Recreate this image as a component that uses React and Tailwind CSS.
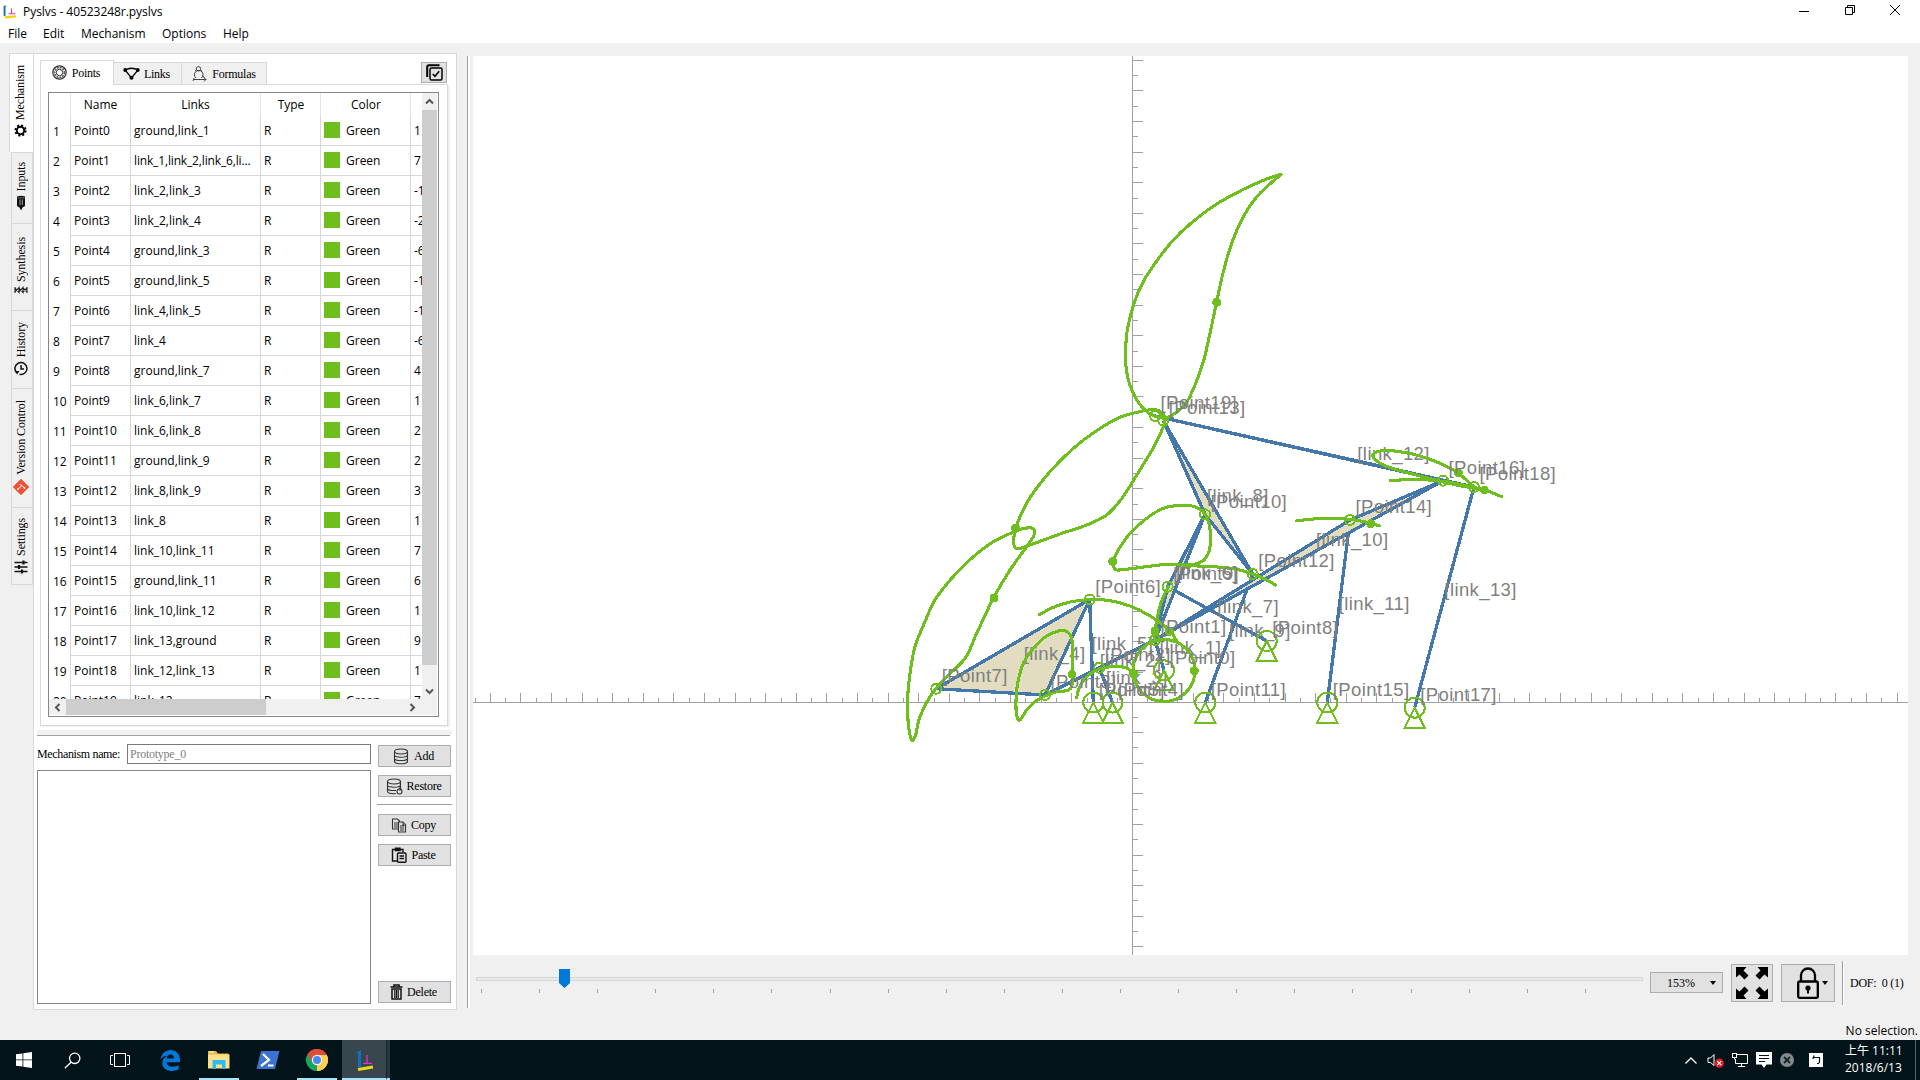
import React from "react";

const UI = "font-['Open_Sans','Noto_Sans',sans-serif] text-[12px]";
const SERIF = "font-['Liberation_Serif',serif] text-[12px] tracking-[-0.25px]";

/* ---------- table data ---------- */

const ROWS = [
  ["Point0", "ground,link_1", "1"],
  ["Point1", "link_1,link_2,link_6,li...", "7"],
  ["Point2", "link_2,link_3", "-1"],
  ["Point3", "link_2,link_4", "-2"],
  ["Point4", "ground,link_3", "-6"],
  ["Point5", "ground,link_5", "-1"],
  ["Point6", "link_4,link_5", "-1"],
  ["Point7", "link_4", "-6"],
  ["Point8", "ground,link_7", "4"],
  ["Point9", "link_6,link_7", "1"],
  ["Point10", "link_6,link_8", "2"],
  ["Point11", "ground,link_9", "2"],
  ["Point12", "link_8,link_9", "3"],
  ["Point13", "link_8", "1"],
  ["Point14", "link_10,link_11", "7"],
  ["Point15", "ground,link_11", "6"],
  ["Point16", "link_10,link_12", "1"],
  ["Point17", "link_13,ground", "9"],
  ["Point18", "link_12,link_13", "1"],
  ["Point19", "link_12", "7"],
];

/* ---------- mechanism data ---------- */

const ORIGIN = [1132, 702];
const TICK = 15.3;

const POINTS = [
  [1164, 670.3, true],
  [1155, 640],
  [1099.3, 667.7],
  [1045, 695],
  [1112.5, 702.5, true],
  [1093.3, 702.5, true],
  [1089.7, 599.5],
  [936.3, 688.7],
  [1266.7, 641, true],
  [1167.7, 586.7],
  [1205, 514.3],
  [1205.3, 702.5, true],
  [1252.7, 574],
  [1163.3, 420.7],
  [1350, 520],
  [1327.3, 702.5, true],
  [1443, 480.7],
  [1414.7, 707.7, true],
  [1474, 487],
  [1155, 416],
];

const LINKS = {
  link_1: [0, 1],
  link_2: [1, 2, 3],
  link_3: [2, 4],
  link_4: [3, 6, 7],
  link_5: [5, 6],
  link_6: [1, 9, 10],
  link_7: [8, 9],
  link_8: [10, 12, 13],
  link_9: [11, 12],
  link_10: [1, 14, 16],
  link_11: [14, 15],
  link_12: [16, 18, 19],
  link_13: [17, 18],
};

/* Each trace is sampled in thirds of a pixel from its own offset. */
const TRACES = [
  { at: [880, 150], pts: [[1203,73],[1160,87],[1090,118],[1010,162],[935,218],[880,270],[825,340],[790,395],[762,460],[742,540],[737,600],[738,650],[748,700],[770,750],[793,778],[820,797],[855,804],[885,790],[918,760],[945,705],[970,635],[990,550],[1010,455],[1030,365],[1055,280],[1090,200],[1135,135],[1203,73]] },
  { at: [880, 400], pts: [[407,383],[425,340],[455,285],[510,215],[580,145],[650,92],[720,52],[780,35],[820,29],[845,38],[855,62],[830,125],[795,185],[760,242],[725,296],[680,345],[620,375],[540,402],[450,435],[415,446],[403,440],[402,410],[407,383]] },
  { at: [880, 400], pts: [[430,385],[385,403],[340,425],[280,470],[215,535],[165,600],[135,665],[105,740],[90,820],[83,890],[84,960],[90,1005],[99,1022],[108,1000],[120,950],[150,890],[190,840],[255,775],[290,700],[340,595],[390,510],[440,440],[462,405],[458,385],[430,385]] },
  { at: [880, 400], pts: [[577,823],[577,760],[575,715],[562,696],[540,692],[500,708],[460,745],[430,790],[413,850],[408,900],[410,945],[420,960],[440,930],[465,905],[495,888],[530,875],[560,872],[575,860],[577,823]] },
  { at: [880, 400], pts: [[590,893],[598,862],[620,830],[655,808],[700,800],[740,804],[762,822]] },
  { at: [880, 400], pts: [[478,644],[520,622],[570,606],[629,599],[690,602],[750,618],[800,642],[840,668],[870,692],[893,728]] },
  { at: [880, 400], pts: [[865,560],[850,590],[838,625],[830,665],[825,692],[825,718]] },
  { at: [1080, 440], pts: [[98,365],[115,330],[150,280],[200,235],[250,205],[300,196],[345,200],[375,222],[388,255],[392,300],[385,340],[365,365],[325,375],[260,373],[200,380],[118,390],[103,385],[98,365]] },
  { at: [1080, 440], pts: [[320,377],[400,380],[470,388],[518,402],[550,415],[587,435]] },
  { at: [1280, 430], pts: [[48,273],[100,267],[160,265],[210,268],[265,278],[300,288]] },
  { at: [1280, 430], pts: [[330,152],[380,149],[430,149],[489,154],[550,165],[613,180],[665,200]] },
  { at: [1280, 430], pts: [[582,171],[535,130],[480,100],[420,78],[360,65],[310,62],[282,70],[282,85],[310,105],[360,122],[420,138],[489,156],[540,167],[610,180]] },
];

const DOTS = [
  [1216.7, 302.3], [1184.7, 404.5, 3], [1015.7, 528], [994, 598], [1072, 674.3],
  [1133.7, 673.7], [1169.3, 631.5], [1194.3, 670.7], [1155, 631], [1112.7, 561.5],
  [1188.3, 566, 3], [1370.7, 523.7], [1484.3, 490], [1458.3, 472.7],
];

function smooth({ at, pts }) {
  const p = pts.map(([x, y]) => [at[0] + x / 3, at[1] + y / 3]);
  let d = `M${p[0][0]} ${p[0][1]}`;
  for (let i = 0; i < p.length - 1; i++) {
    const a = p[i - 1] || p[i];
    const b = p[i];
    const c = p[i + 1];
    const e = p[i + 2] || c;
    d += `C${b[0] + (c[0] - a[0]) / 6} ${b[1] + (c[1] - a[1]) / 6} ${c[0] - (e[0] - b[0]) / 6} ${c[1] - (e[1] - b[1]) / 6} ${c[0]} ${c[1]}`;
  }
  return d;
}

function axisTicks() {
  let d = "";
  for (let i = -45; i <= 50; i++) {
    const len = i % 2 === 0 ? 10 : 5;
    const x = ORIGIN[0] + Math.trunc(i * TICK) + 0.5;
    if (x > 474) d += `M${x} 702.5V${702.5 - len}`;
    const y = ORIGIN[1] + Math.trunc(i * TICK) + 0.5;
    if (y > 56 && y < 955) d += `M1132.5 ${y}H${1132.5 + len}`;
  }
  return d;
}

function Canvas() {
  const entries = Object.entries(LINKS);
  const bars = entries.filter(([, v]) => v.length === 2);
  const plates = entries.filter(([, v]) => v.length > 2);
  return (
    <svg width="1435" height="899" viewBox="473 56 1435 899" className="block bg-white">
      <g shapeRendering="crispEdges" fill="none">
        <path d={`M473 702.5H1908M1132.5 56V955${axisTicks()}`} stroke="#a0a0a4" strokeWidth="1" />
        {bars.map(([k, [a, b]]) => (
          <path key={k} d={`M${POINTS[a][0]} ${POINTS[a][1]}L${POINTS[b][0]} ${POINTS[b][1]}`} stroke="#4477aa" strokeWidth="3.3" />
        ))}
        {plates.map(([k, v]) => (
          <polygon key={k} points={v.map((i) => `${POINTS[i][0]},${POINTS[i][1]}`).join(" ")} fill="#e2dcc0" stroke="#4477aa" strokeWidth="3.3" strokeLinejoin="bevel" />
        ))}
      </g>
      <g fill="#808080" className="font-['Liberation_Sans',Arial,sans-serif] text-[18.5px] tracking-[0.4px]">
        {entries.map(([k, v]) => {
          const x = v.reduce((s, i) => s + POINTS[i][0], 0) / v.length;
          const y = v.reduce((s, i) => s + POINTS[i][1], 0) / v.length;
          return <text key={k} x={x} y={y - 1}>{`[${k}]`}</text>;
        })}
      </g>
      <g shapeRendering="crispEdges" fill="none" stroke="#6ebe1e">
        {TRACES.map((t, i) => (
          <path key={i} d={smooth(t)} strokeWidth="3.1" strokeLinecap="round" strokeLinejoin="round" />
        ))}
        <circle cx="1164" cy="670.5" r="31" strokeWidth="3.1" />
        {DOTS.map(([x, y, r = 4.5], i) => (
          <circle key={i} cx={x} cy={y} r={r} fill="#6ebe1e" stroke="none" />
        ))}
        {POINTS.map(([x, y, ground], i) => (
          <path
            key={i}
            strokeWidth="2"
            d={
              ground
                ? `M${x - 10} ${y}a10 10 0 1 0 20 0a10 10 0 1 0 -20 0M${x} ${y}L${x - 10} ${y + 20}H${x + 10}Z`
                : `M${x - 5} ${y}a5 5 0 1 0 10 0a5 5 0 1 0 -10 0`
            }
          />
        ))}
      </g>
      <g fill="#808080" className="font-['Liberation_Sans',Arial,sans-serif] text-[18.5px] tracking-[0.4px]">
        {POINTS.map(([x, y], i) => (
          <text key={i} x={x + 5.5} y={y - 6.7}>{`[Point${i}]`}</text>
        ))}
      </g>
    </svg>
  );
}

/* ---------- icons ---------- */

const Logo = ({ size }) => (
  <svg width={size} height={size} viewBox="0 0 18 18" fill="none">
    <path d="M2 2V14" stroke="#0a6fc2" strokeWidth="2.4" />
    <path d="M1 2.2L4 1" stroke="#0a6fc2" strokeWidth="1.4" />
    <path d="M2 16L17 14.6" stroke="#f2d80a" strokeWidth="3" />
    <path d="M11 4.5V11M7 11.3H16" stroke="#f02be8" strokeWidth="1.4" />
  </svg>
);

const GearIcon = () => (
  <svg width="13" height="13" viewBox="0 0 13 13" fill="none" stroke="#000">
    <circle cx="6.5" cy="6.5" r="3.7" strokeWidth="2" />
    <circle cx="6.5" cy="6.5" r="5.2" strokeWidth="1.8" strokeDasharray="2.1 1.98" />
  </svg>
);
const PlugIcon = () => (
  <svg width="10" height="16" viewBox="0 0 10 16">
    <path d="M1 1.5Q5 0 9 1.500V11L6.500 12.500L5 15.500L3.500 12.500L1 11Z" fill="#111" />
    <path d="M4 4.500v5.500M6.300 4.500v5.500" stroke="#ddd" strokeWidth="0.7" />
    <path d="M1.500 2.900H8.500" stroke="#999" strokeWidth="0.700" />
  </svg>
);
const SpringIcon = () => (
  <svg width="14" height="8" viewBox="0 0 14 8" fill="none" stroke="#222" strokeWidth="1.1">
    <path d="M1 1V7M13 1V7M1 2L5 6.500V1.500L1 6M5 2L9 6.500V1.500L5 6M9 2L13 6M9 6L13 2" />
  </svg>
);
const HistoryIcon = () => (
  <svg width="14" height="15" viewBox="0 0 14 15" fill="none" stroke="#111" strokeWidth="1.500">
    <path d="M2.500 11.500A6 6 0 1 1 5.500 13.300" />
    <path d="M7 4V8H10" />
    <path d="M1 10L5.500 10L3 13.500Z" fill="#111" stroke="none" />
  </svg>
);
const GitIcon = () => (
  <svg width="16" height="16" viewBox="0 0 16 16">
    <path d="M8 0.300L15.700 8L8 15.700L0.300 8Z" fill="#f05033" stroke="#f05033" strokeLinejoin="round" />
    <path d="M5 10L9 6.500L6.500 5.500M9 6.500L11.500 9" stroke="#fff" strokeWidth="0.900" fill="none" />
    <circle cx="5" cy="10" r="0.900" fill="#fff" />
    <circle cx="11.500" cy="9" r="0.900" fill="#fff" />
  </svg>
);
const SlidersIcon = () => (
  <svg width="14" height="14" viewBox="0 0 14 14" stroke="#111" fill="none">
    <path d="M0.500 2.500H13.500M0.500 7H13.500M0.500 11.500H13.500" strokeWidth="1.700" />
    <path d="M9.500 0.500V4.500M5 5V9M8 9.500V13.500" strokeWidth="2.200" />
  </svg>
);
const PointsIcon = () => (
  <svg width="15" height="15" viewBox="0 0 15 15" fill="none" stroke="#333">
    <circle cx="7.500" cy="7.500" r="6.700" strokeWidth="1.200" />
    <circle cx="7.500" cy="7.500" r="5" strokeWidth="1.900" strokeDasharray="2 0.900" stroke="#666" />
    <circle cx="7.500" cy="7.500" r="3.200" strokeWidth="1" />
  </svg>
);
const LinksIcon = () => (
  <svg width="17" height="13" viewBox="0 0 17 13" fill="none" stroke="#000">
    <path d="M2 3Q8.500 -0.500 15 3L8.500 11Z" strokeWidth="1.300" />
    <circle cx="2.200" cy="3" r="1.900" fill="#000" stroke="none" />
    <circle cx="14.800" cy="3" r="1.900" fill="#000" stroke="none" />
    <circle cx="8.500" cy="10.800" r="2" fill="#000" stroke="none" />
  </svg>
);
const FormulasIcon = () => (
  <svg width="15" height="16" viewBox="0 0 15 16" fill="none" stroke="#444" strokeWidth="1">
    <circle cx="6.500" cy="2.800" r="2.200" />
    <path d="M4 12A4.300 4.300 0 1 1 9.500 12M3 5L5 3M10 6L8.500 3.500M1 13.500H14M12 11.500L14 13.500L12 15.500M2 12L1 15M10.500 9.500L12.500 12" />
  </svg>
);
const SelectIcon = () => (
  <svg width="17" height="17" viewBox="0 0 17 17" fill="none" stroke="#000">
    <path d="M13.500 1.200H3Q1.200 1.200 1.200 3V13" strokeWidth="2" />
    <rect x="4" y="4" width="12" height="12" rx="1.500" strokeWidth="1.500" />
    <path d="M6.800 10L9 12.300L13.200 7.300" strokeWidth="1.600" />
  </svg>
);
const DatabaseIcon = ({ restore }) => (
  <svg width="17" height="17" viewBox="0 0 17 17" fill="none" stroke="#333" strokeWidth="1.100">
    <ellipse cx="8" cy="3.500" rx="6.500" ry="2.500" />
    <path d="M1.500 3.500V13.300C1.500 16.600 14.500 16.600 14.500 13.300V3.500M1.500 7C1.500 10 14.500 10 14.500 7M1.500 10.200C1.500 13.300 14.500 13.300 14.500 10.200" />
    {restore && (
      <>
        <rect x="10" y="10" width="7" height="7" fill="#e1e1e1" stroke="none" />
        <circle cx="13.500" cy="13.500" r="2.500" />
        <path d="M13 9.800L15 11L13.500 12.500" />
      </>
    )}
  </svg>
);
const CopyIcon = () => (
  <svg width="16" height="15" viewBox="0 0 16 15" fill="#e1e1e1" stroke="#333" strokeWidth="1.100">
    <path d="M1.500 1H6.500L8.500 3V11H1.500Z" />
    <path d="M3 5H7M3 7H7M3 9H7" />
    <path d="M7.500 4H12L14.500 6.500V14H7.500Z" />
    <path d="M9 8H13M9 10H13M9 12H13M12 4V7H14.500" />
  </svg>
);
const PasteIcon = () => (
  <svg width="16" height="16" viewBox="0 0 16 16" fill="none" stroke="#111" strokeWidth="1.400">
    <path d="M6 14H1.500V2.500H12V5" />
    <path d="M4.500 3.500V1.200H9V3.500Z" fill="#111" />
    <rect x="6.500" y="6" width="8.500" height="9.200" rx="1" />
    <path d="M8.500 9H13M8.500 11.500H13" />
  </svg>
);
const TrashIcon = () => (
  <svg width="13" height="16" viewBox="0 0 13 16" fill="none" stroke="#111">
    <path d="M0.500 3H12.500M4 2.500V1H9V2.500" strokeWidth="1.600" />
    <path d="M2 5H11V15H2Z" strokeWidth="1.500" />
    <path d="M4.800 6V14M8.200 6V14M6.500 6V14" strokeWidth="1.200" />
  </svg>
);
const Chevron = ({ d }) => (
  <svg width="9" height="9" viewBox="0 0 9 9" fill="none" stroke="#555" strokeWidth="2">
    <path d={d} />
  </svg>
);

/* ---------- left side ---------- */

const SIDE_TABS = [
  ["Mechanism", "h-[99px] w-[24px] ml-0 bg-white border-r-0 pb-[15px] pr-[3px]", <GearIcon />],
  ["Inputs", "h-[71px] w-[22px] ml-[2px] bg-[#f0f0f0] pb-[12px] pr-[2px]", <PlugIcon />],
  ["Synthesis", "h-[87px] w-[22px] ml-[2px] bg-[#f0f0f0] pb-[16px] pr-[2px]", <SpringIcon />],
  ["History", "h-[78px] w-[22px] ml-[2px] bg-[#f0f0f0] pb-[12px] pr-[2px]", <HistoryIcon />],
  ["Version Control", "h-[119px] w-[22px] ml-[2px] bg-[#f0f0f0] pb-[12px] pr-[2px]", <GitIcon />],
  ["Settings", "h-[78px] w-[22px] ml-[2px] bg-[#f0f0f0] pb-[10px] pr-[2px]", <SlidersIcon />],
];

function SideTabs() {
  return (
    <div className="flex flex-col w-[24px] mt-[10px]">
      {SIDE_TABS.map(([name, cls, icon]) => (
        <div key={name} className={`box-border border border-[#d9d9d9] border-b-0 last:border-b flex flex-col items-center justify-end gap-[4px] shrink-0 ${cls}`}>
          <span className="font-['Liberation_Serif',serif] text-[12px] tracking-[-0.1px] [writing-mode:vertical-rl] rotate-180 leading-[16px] whitespace-nowrap">{name}</span>
          {icon}
        </div>
      ))}
    </div>
  );
}

function PointTable() {
  const cell = "h-full border-r border-b border-[#d8d8d8] flex items-center pl-[3px] whitespace-nowrap overflow-hidden shrink-0";
  const head = "h-full border-r border-[#e5e5e5] flex items-center justify-center shrink-0";
  return (
    <div className={`w-[391px] h-[625px] border border-[#828790] bg-white flex flex-col leading-[16px] ${UI}`}>
      <div className="flex h-[606px] w-full">
        <div className="w-[373px] h-full overflow-hidden flex flex-col">
          <div className="flex h-[23px] shrink-0 w-[420px]">
            <div className={`${head} w-[22px]`} />
            <div className={`${head} w-[60px]`}>Name</div>
            <div className={`${head} w-[130px]`}>Links</div>
            <div className={`${head} w-[60px] pl-px`}>Type</div>
            <div className={`${head} w-[90px] pl-px`}>Color</div>
          </div>
          {ROWS.map(([name, links, v], i) => (
            <div key={name} className="flex h-[30px] shrink-0 w-[420px]">
              <div className="w-[22px] h-full border-r border-[#d8d8d8] pl-[4px] pt-[1px] flex items-center shrink-0">{i + 1}</div>
              <div className={`${cell} w-[60px]`}>{name}</div>
              <div className={`${cell} w-[130px] ${links.length > 20 ? "tracking-[-0.15px]" : ""}`}>{links}</div>
              <div className={`${cell} w-[60px]`}>R</div>
              <div className={`${cell} w-[90px] gap-[6px]`}>
                <div className="size-[16px] mb-[1px] bg-[#6ebe1e]" />
                Green
              </div>
              <div className={`${cell} w-[58px]`}>{v}</div>
            </div>
          ))}
        </div>
        <div className="w-[15px] h-full bg-[#f0f0f0] flex flex-col items-center">
          <div className="h-[17px] flex items-center"><Chevron d="M1 6.500L4.500 3L8 6.500" /></div>
          <div className="w-full h-[555px] bg-[#cdcdcd]" />
          <div className="mt-[22px]"><Chevron d="M1 2.500L4.500 6L8 2.500" /></div>
        </div>
      </div>
      <div className="w-[388px] h-[16px] bg-[#f0f0f0] flex items-center">
        <div className="w-[17px] flex justify-center"><Chevron d="M6.500 1L3 4.500L6.500 8" /></div>
        <div className="w-[200px] h-full bg-[#cdcdcd]" />
        <div className="ml-[142px]"><Chevron d="M2.500 1L6 4.500L2.500 8" /></div>
      </div>
    </div>
  );
}

function PushButton({ icon, children, className = "" }) {
  return (
    <div className={`w-[73px] h-[22px] bg-[#e1e1e1] border border-[#adadad] flex items-center justify-center gap-[4px] pr-[2px] leading-[14px] ${className}`}>
      {icon}
      <span>{children}</span>
    </div>
  );
}

function LeftPanel() {
  return (
    <div className="w-[424px] h-[957px] mt-[10px] bg-white border border-[#d9d9d9] flex flex-col">
      <div className={`flex items-end h-[30px] pt-[6px] pl-[6px] leading-[14px] ${SERIF}`}>
        <div className="w-[74px] h-[25px] -mb-px relative bg-white border border-b-0 border-[#d9d9d9] flex items-center justify-center gap-[5px] pb-[1px] pr-[2px]">
          <PointsIcon />Points
        </div>
        <div className="w-[68px] h-[22px] bg-[#f0f0f0] border border-l-0 border-b-0 border-[#d9d9d9] flex items-center justify-center gap-[4px] pr-[2px]">
          <LinksIcon />Links
        </div>
        <div className="w-[85px] h-[22px] bg-[#f0f0f0] border border-l-0 border-b-0 border-[#d9d9d9] flex items-center justify-center gap-[5px]">
          <FormulasIcon />Formulas
        </div>
        <div className="ml-[154px] mb-[1px] w-[26px] h-[21px] bg-[#e1e1e1] border border-[#adadad] flex items-center justify-center shrink-0">
          <SelectIcon />
        </div>
      </div>
      <div className="ml-[6px] w-[408px] h-[642px] border border-[#d9d9d9] pl-[7px] pt-[7px] shadow-[2px_1px_0_#f0f0f0]">
        <PointTable />
      </div>
      <div className="ml-[3px] mt-[4px] w-[415px] h-[5px] bg-[#f0f0f0]" />
      <div className="ml-[3px] w-[413px] h-px bg-[#a0a0a0]" />
      <div className={`flex ml-[3px] mt-[8px] ${SERIF}`}>
        <div className="w-[334px] flex flex-col">
          <div className="flex h-[20px] items-center justify-between">
            <span className="leading-[14px] whitespace-nowrap tracking-[-0.35px]">Mechanism name:</span>
            <div className="w-[244px] h-[20px] border border-[#7a7a7a] bg-white pl-[2px] flex items-center text-[#808080] leading-[14px]">Prototype_0</div>
          </div>
          <div className="mt-[6px] w-[334px] h-[234px] border border-[#828790] bg-white" />
        </div>
        <div className="ml-[7px] mt-[1px] w-[73px] flex flex-col">
          <PushButton icon={<DatabaseIcon />}>Add</PushButton>
          <PushButton className="mt-[8px]" icon={<DatabaseIcon restore />}>Restore</PushButton>
          <div className="mt-[7px] h-px w-[75px] -ml-px bg-[#a0a0a0]" />
          <PushButton className="mt-[9px]" icon={<CopyIcon />}>Copy</PushButton>
          <PushButton className="mt-[8px]" icon={<PasteIcon />}>Paste</PushButton>
          <PushButton className="mt-[115px]" icon={<TrashIcon />}>Delete</PushButton>
        </div>
      </div>
    </div>
  );
}

/* ---------- bottom controls ---------- */

function ZoomBar() {
  return (
    <div className="flex h-[65px] w-[1435px]">
      <div className="ml-[3px] mt-[14px] w-[1167px] flex flex-col">
        <div className="h-[20px] relative flex items-center">
          <div className="w-full h-[4px] border border-[#d6d6d6] bg-[#e7eaea]" />
          <svg className="absolute left-[83px] top-0" width="11" height="19" viewBox="0 0 11 19">
            <path d="M0 0H11V14L5.500 19L0 14Z" fill="#0078d7" />
          </svg>
        </div>
        <div className="flex ml-[5px] w-[1105px] justify-between">
          {Array.from({ length: 20 }, (_, i) => (
            <div key={i} className="w-px h-[4px] bg-[#a8a898]" />
          ))}
        </div>
      </div>
      <div className={`ml-[7px] mt-[17px] w-[73px] h-[21px] bg-[#e1e1e1] border border-[#adadad] flex items-center pl-[16px] ${SERIF}`}>
        <span className="w-[43px] tracking-normal">153%</span>
        <div className="border-x-[3.500px] border-x-transparent border-t-[4px] border-t-black" />
      </div>
      <div className="ml-[8px] mt-[9px] w-[42px] h-[38px] bg-[#e1e1e1] border border-[#adadad] flex items-center justify-center">
        <svg width="32" height="32" viewBox="0 0 32 32">
          {["", "translate(32 0) scale(-1 1)", "translate(0 32) scale(1 -1)", "translate(32 32) scale(-1 -1)"].map((t) => (
            <path key={t} transform={t} d="M0 0H10.500L7.500 3.500L12.500 8.500L8.500 12.500L3.500 7.500L0 10.500Z" fill="#000" />
          ))}
        </svg>
      </div>
      <div className="ml-[8px] mt-[9px] w-[54px] h-[38px] bg-[#e1e1e1] border border-[#adadad] flex items-center pl-[15px] gap-[3px]">
        <svg width="22" height="32" viewBox="0 0 22 32" fill="none" stroke="#000">
          <path d="M4 14V8.500A7 7 0 0 1 18 8.500V14" strokeWidth="2.300" />
          <rect x="1.200" y="14.500" width="19.600" height="16.300" rx="1.500" strokeWidth="2.300" />
          <circle cx="11" cy="21" r="2.600" fill="#000" stroke="none" />
          <path d="M11 21V26.500" strokeWidth="2" />
        </svg>
        <div className="border-x-[3.500px] border-x-transparent border-t-[4px] border-t-black" />
      </div>
      <div className="ml-[7px] mt-[6px] w-[2px] h-[44px] border-l border-l-[#a0a0a0] bg-white" />
      <div className={`ml-[6px] mt-[20px] leading-[16px] whitespace-pre ${SERIF}`}>{"DOF:  0 (1)"}</div>
    </div>
  );
}

/* ---------- taskbar ---------- */

function Taskbar() {
  const slot = "h-full flex items-center justify-center shrink-0";
  return (
    <div className="h-[40px] w-full bg-[#02131a] flex">
      <div className={`${slot} w-[48px]`}>
        <svg width="16" height="16" viewBox="0 0 16 16" fill="#fff">
          <path d="M0 2.300L6.500 1.400V7.500H0ZM7.300 1.300L16 0V7.500H7.300ZM0 8.300H6.500V14.600L0 13.700ZM7.300 8.300H16V16L7.300 14.700Z" />
        </svg>
      </div>
      <div className={`${slot} w-[48px]`}>
        <svg width="17" height="17" viewBox="0 0 17 17" fill="none" stroke="#fff" strokeWidth="1.300">
          <circle cx="10.700" cy="6.300" r="5.200" />
          <path d="M7 10.200L0.800 16.200" />
        </svg>
      </div>
      <div className={`${slot} w-[48px]`}>
        <svg width="20" height="14" viewBox="0 0 20 14" fill="none" stroke="#fff" strokeWidth="1">
          <rect x="4.500" y="0.500" width="11" height="13" />
          <path d="M3 2.500H0.500V11.500H3M17 2.500H19.500V11.500H17" />
        </svg>
      </div>
      <div className={`${slot} w-[52px]`}>
        <svg width="20" height="21" viewBox="0 0 20 21">
          <path d="M0.500 9.500C1.500 3.500 5.500 0 10.500 0C16.500 0 20 4.500 20 9.500V12.300H6.500C6.800 15.300 9.500 16.700 12.500 16.700C15 16.700 17 16 18.600 15V19.300C16.800 20.300 14.500 21 11.800 21C6 21 2.300 17.500 2.300 13C2.300 9.500 4.500 7 7.200 5.800C4.500 6 2 7.300 0.500 9.500ZM6.700 8.500H14C14 6 12.500 4.500 10.500 4.500C8.500 4.500 7 6 6.700 8.500Z" fill="#0078d7" />
        </svg>
      </div>
      <div className={`${slot} w-[46px]`}>
        <div className="w-[40px] h-full border-b-2 border-[#a8e4f8] flex items-center justify-center pt-[2px]">
          <svg width="22" height="18" viewBox="0 0 22 18">
            <path d="M0 0H8L10 2.500H20.500V17H0Z" fill="#e8b93f" />
            <path d="M0 3.500H21.500V17.500H0Z" fill="#ffe08a" />
            <path d="M4.500 9H17.500V18H14V13.500H8V18H4.500Z" fill="#2fb9f0" />
            <path d="M1 1H6" stroke="#fff" />
          </svg>
        </div>
      </div>
      <div className={`${slot} w-[52px]`}>
        <svg width="24" height="18" viewBox="0 0 24 18">
          <path d="M5 0H23.500L19 18H0.500Z" fill="#3a74d0" />
          <path d="M7 3L13 9L5 15" stroke="#fff" strokeWidth="2.200" fill="none" />
          <path d="M12 14.500H17.500" stroke="#fff" strokeWidth="2" />
        </svg>
      </div>
      <div className={`${slot} w-[46px]`}>
        <div className="w-[40px] h-full border-b-2 border-[#a8e4f8] flex items-center justify-center pt-[2px]">
          <svg width="22" height="22" viewBox="0 0 22 22">
            <path d="M11 11L1.470 5.500A11 11 0 0 1 20.530 5.500Z" fill="#dd4b3e" />
            <path d="M11 11L20.530 5.500A11 11 0 0 1 11 22Z" fill="#fdd04d" />
            <path d="M11 11L11 22A11 11 0 0 1 1.470 5.500Z" fill="#1aa260" />
            <path d="M11 6H20.700A11 11 0 0 1 11 22L15.500 13.500Z" fill="#fdd04d" />
            <path d="M11 6H20.700A11 11 0 0 0 1.470 5.500L6.500 13.500Z" fill="#dd4b3e" />
            <circle cx="11" cy="11" r="5.200" fill="#f3f3f3" />
            <circle cx="11" cy="11" r="4" fill="#4a8af4" />
          </svg>
        </div>
      </div>
      <div className="w-[44px] ml-[2px] h-full bg-[#38474d] border-b-2 border-[#a8e4f8] flex items-center justify-center pl-[2px] pt-[2px] shrink-0">
        <svg width="18" height="21" viewBox="0 0 18 21" fill="none">
          <path d="M3.500 1V17" stroke="#0f70b8" strokeWidth="3" />
          <path d="M0.500 3L5 0.800" stroke="#0f70b8" strokeWidth="1.500" />
          <path d="M2 19.500L17 17" stroke="#e9d816" strokeWidth="3" />
          <path d="M11 5V13M7 13.300H16" stroke="#e52be0" strokeWidth="1.300" />
        </svg>
      </div>
      <div className="w-[4px] h-full bg-[#2a383e] border-b-2 border-b-[#a8e4f8] border-l border-l-[#15242a] shrink-0" />
      <div className="flex-1" />
      <div className={`${slot} w-[24px]`}>
        <svg width="12" height="7" viewBox="0 0 12 7" fill="none" stroke="#fff" strokeWidth="1.300"><path d="M0.500 6.500L6 1L11.500 6.500" /></svg>
      </div>
      <div className={`${slot} w-[24px]`}>
        <svg width="17" height="15" viewBox="0 0 17 15" fill="none">
          <path d="M1 5H3.500L7 1.500V12.500L3.500 9.500H1Z" stroke="#fff" />
          <circle cx="12.300" cy="10.200" r="4.600" fill="#e01b24" />
          <path d="M10.300 8.200L14.300 12.200M14.300 8.200L10.300 12.200" stroke="#fff" strokeWidth="1.200" />
        </svg>
      </div>
      <div className={`${slot} w-[24px] pl-[2px]`}>
        <svg width="16" height="14" viewBox="0 0 16 14" fill="none" stroke="#fff">
          <path d="M5 1.500H15.500V10.500H3.500V6M9.500 10.500V13.500M6 13.500H13" />
          <rect x="0.500" y="0.500" width="4" height="4" />
          <path d="M2.500 4.500V6.500" />
        </svg>
      </div>
      <div className={`${slot} w-[24px] pl-[2px]`}>
        <svg width="16" height="16" viewBox="0 0 16 16">
          <path d="M0 0H16V12.500H10.500L8 16L5.500 12.500H0Z" fill="#fff" />
          <path d="M3 3.500H13M3 6.500H13M3 9.500H9" stroke="#02131a" />
        </svg>
      </div>
      <div className={`${slot} w-[24px]`}>
        <svg width="14" height="14" viewBox="0 0 14 14">
          <circle cx="7" cy="7" r="7" fill="#83898c" />
          <path d="M4 4L10 10M10 4L4 10" stroke="#17252b" strokeWidth="1.800" />
        </svg>
      </div>
      <div className={`${slot} w-[34px]`}>
        <svg width="14" height="14" viewBox="0 0 14 14">
          <rect width="14" height="14" fill="#fff" />
          <path d="M3.500 4.500H10.500V8.500Q10.500 10.700 8 10.500M5 2.500L4 6" fill="none" stroke="#02131a" strokeWidth="1.200" />
        </svg>
      </div>
      <div className="ml-[12px] w-[70px] h-full text-white font-['Open_Sans','Noto_Sans_CJK_TC',sans-serif] text-[12px] leading-[17px] pt-[2px] whitespace-nowrap">
        <div>上午 11:11</div>
        <div>2018/6/13</div>
      </div>
      <div className="w-[5px] h-full border-l border-[#56646a]" />
    </div>
  );
}

/* ---------- window ---------- */

export default function App() {
  return (
    <div className="w-[1920px] h-[1080px] overflow-hidden flex flex-col bg-[#f0f0f0] text-black">
      <div className={`h-[24px] bg-white flex items-center pl-[3px] ${UI}`}>
        <div className="w-[20px]"><Logo size={14} /></div>
        <span className="leading-[16px] tracking-[-0.05px]">Pyslvs - 40523248r.pyslvs</span>
        <div className="flex-1" />
        <div className="flex gap-[35px] mr-[20px] mb-[4px] items-center">
          <svg width="11" height="11" viewBox="0 0 11 11" className="block" stroke="#000"><path d="M0 6H10" shapeRendering="crispEdges" /></svg>
          <svg width="10" height="10" viewBox="0 0 10 10" className="block" fill="none" stroke="#000">
            <path d="M0.500 2.500H7.500V9.500H0.500ZM2.500 2.500V0.500H9.500V7.500H7.500" />
          </svg>
          <svg width="10" height="10" viewBox="0 0 10 10" className="block" stroke="#000"><path d="M0 0L10 10M10 0L0 10" /></svg>
        </div>
      </div>
      <div className={`h-[19px] bg-white flex items-center pl-[8px] pt-[1px] leading-[16px] ${UI}`}>
        <span className="w-[35px]">File</span>
        <span className="w-[38px]">Edit</span>
        <span className="w-[81px]">Mechanism</span>
        <span className="w-[61px]">Options</span>
        <span>Help</span>
      </div>
      <div className="h-[977px] flex pl-[9px]">
        <SideTabs />
        <LeftPanel />
        <div className="ml-[10px] mt-[13px] w-[3px] h-[952px] border-l border-l-[#a0a0a0] bg-white" />
        <div className="ml-[3px] mt-[13px] w-[1435px] flex flex-col">
          <Canvas />
          <ZoomBar />
        </div>
      </div>
      <div className={`h-[20px] flex justify-end items-center pr-[2px] pt-[2px] leading-[16px] ${UI}`}>No selection.</div>
      <Taskbar />
    </div>
  );
}
